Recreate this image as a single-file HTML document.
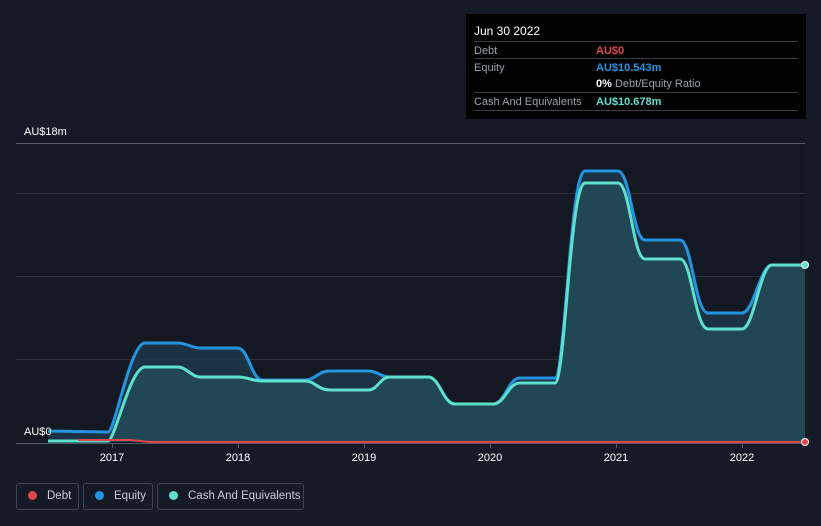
<!DOCTYPE html><html><head><style>
body{margin:0;background:#151b26;font-family:"Liberation Sans",sans-serif;}
.wrap{position:relative;width:821px;height:526px;overflow:hidden;background:#151b26}
.tip{position:absolute;left:466px;top:14px;width:340px;height:105px;background:#000;color:#fff;font-size:11px}
.tip .h{position:absolute;left:8px;top:10px;font-size:12px}
.row{position:absolute;left:8px;width:324px;border-top:1px solid #3a3f47;height:17px}
.row span{position:absolute;top:3px}
.l{left:0;color:#9aa0a8}.v{left:122px;font-weight:bold}
.leg{position:absolute;top:483px;height:27px;border:1px solid #3e444e;border-radius:3px;color:#c9ced6;font-size:11.5px;line-height:25px;box-sizing:border-box;white-space:nowrap}
.leg i{display:inline-block;width:9px;height:9px;border-radius:50%;margin:0 10px 0 11px;vertical-align:-1px}
</style></head><body><div class="wrap">
<svg width="821" height="526" style="position:absolute;left:0;top:0">
<rect x="16" y="143" width="789" height="300" fill="#131822"/>
<g stroke="#2a303b" stroke-width="1"><line x1="16" y1="143.5" x2="805" y2="143.5" stroke="#555b66"/><line x1="16" y1="193.5" x2="805" y2="193.5"/><line x1="16" y1="276.5" x2="805" y2="276.5"/><line x1="16" y1="359.5" x2="805" y2="359.5"/></g>
<line x1="16" y1="443.5" x2="805" y2="443.5" stroke="#555b66"/>
<g stroke="#555b66"><line x1="112.5" y1="443" x2="112.5" y2="448"/><line x1="238.5" y1="443" x2="238.5" y2="448"/><line x1="364.5" y1="443" x2="364.5" y2="448"/><line x1="490.5" y1="443" x2="490.5" y2="448"/><line x1="616.5" y1="443" x2="616.5" y2="448"/><line x1="742.5" y1="443" x2="742.5" y2="448"/></g>
<path d="M48 431 L108 432 C115 432 130 343 145 343 L178 343 C186 343 192 348 200 348 L238 348 C248 348 252 380 262 380 L305 380 C315 380 318 371 330 371 L368 371 C378 371 380 377 390 377 L428 377 C440 377 443 404 455 404 L493 404 C505 404 508 378 520 378 L555 378 C565 378 570 171 585 171 L618 171 C630 171 633 240 645 240 L680 240 C692 240 695 313 708 313 L742 313 C754 313 760 265 772 265 L805 265 L805 442 L48 442Z" fill="#1d3a4d" opacity="0.8"/>
<path d="M48 441 L108 441 C115 441 130 367 145 367 L178 367 C186 367 192 377 200 377 L238 377 C248 377 252 381 262 381 L305 381 C315 381 318 390 330 390 L368 390 C378 390 380 377 390 377 L428 377 C440 377 443 404 455 404 L493 404 C505 404 508 383 520 383 L555 383 C565 383 570 183 585 183 L618 183 C630 183 633 259 645 259 L680 259 C692 259 695 329 708 329 L742 329 C754 329 760 265 772 265 L805 265 L805 442 L48 442Z" fill="#24505a" opacity="0.7"/>
<path d="M48 431 L108 432 C115 432 130 343 145 343 L178 343 C186 343 192 348 200 348 L238 348 C248 348 252 380 262 380 L305 380 C315 380 318 371 330 371 L368 371 C378 371 380 377 390 377 L428 377 C440 377 443 404 455 404 L493 404 C505 404 508 378 520 378 L555 378 C565 378 570 171 585 171 L618 171 C630 171 633 240 645 240 L680 240 C692 240 695 313 708 313 L742 313 C754 313 760 265 772 265 L805 265" fill="none" stroke="#2394df" stroke-width="3" stroke-linejoin="round"/>
<path d="M48 441 L108 441 C115 441 130 367 145 367 L178 367 C186 367 192 377 200 377 L238 377 C248 377 252 381 262 381 L305 381 C315 381 318 390 330 390 L368 390 C378 390 380 377 390 377 L428 377 C440 377 443 404 455 404 L493 404 C505 404 508 383 520 383 L555 383 C565 383 570 183 585 183 L618 183 C630 183 633 259 645 259 L680 259 C692 259 695 329 708 329 L742 329 C754 329 760 265 772 265 L805 265" fill="none" stroke="#5ee0cc" stroke-width="3" stroke-linejoin="round"/>
<path d="M78 440 L130 440 L150 442 L805 442" fill="none" stroke="#e0474c" stroke-width="2"/>
<circle cx="805" cy="265" r="3.5" fill="#5ee0cc" stroke="#fff"/><circle cx="805" cy="442" r="3.5" fill="#e0474c" stroke="#fff"/>
<g fill="#fff" font-size="11" font-family="Liberation Sans"><text x="24" y="135">AU$18m</text><text x="24" y="435">AU$0</text>
<g text-anchor="middle" font-size="11"><text x="112" y="461">2017</text><text x="238" y="461">2018</text><text x="364" y="461">2019</text><text x="490" y="461">2020</text><text x="616" y="461">2021</text><text x="742" y="461">2022</text></g></g>
</svg>
<div class="tip"><div class="h">Jun 30 2022</div>
<div class="row" style="top:27px"><span class="l">Debt</span><span class="v" style="color:#e0474c">AU$0</span></div>
<div class="row" style="top:44px"><span class="l">Equity</span><span class="v" style="color:#2394df">AU$10.543m</span></div>
<div class="row" style="top:61px;border:0"><span class="v" style="color:#fff">0% <b style="color:#9aa0a8;font-weight:normal">Debt/Equity Ratio</b></span></div>
<div class="row" style="top:78px"><span class="l">Cash And Equivalents</span><span class="v" style="color:#5ee0cc">AU$10.678m</span></div>
<div class="row" style="top:96px;height:0"></div></div>
<div class="leg" style="left:16px;width:63px"><i style="background:#e0474c"></i>Debt</div>
<div class="leg" style="left:83px;width:70px"><i style="background:#2394df"></i>Equity</div>
<div class="leg" style="left:157px;width:147px"><i style="background:#5ee0cc"></i>Cash And Equivalents</div>
</div></body></html>
